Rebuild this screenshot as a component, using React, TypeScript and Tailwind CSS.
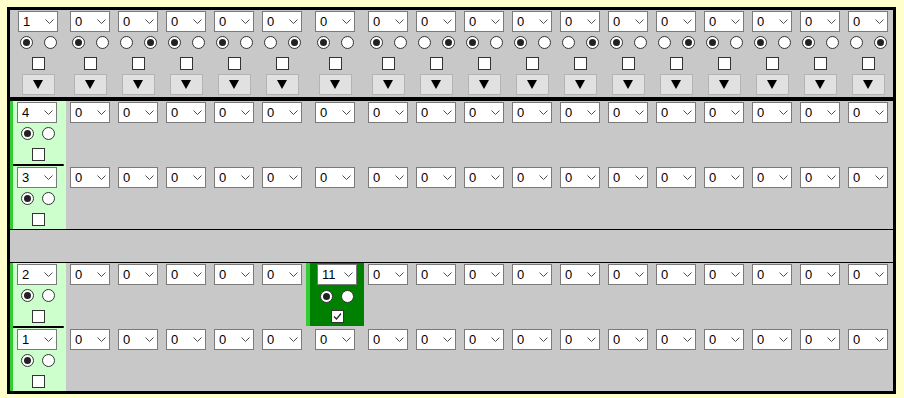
import React from 'react';

// which radio is on in the top header, per column
const TOP_RADIO = [1, 1, 2, 1, 1, 2, 1, 1, 2, 1, 1, 2, 1, 2, 1, 1, 1, 2];

function Chevron() {
  return (
    <svg width="9" height="5" viewBox="0 0 9 5" className="shrink-0">
      <polyline points="0.5,0.5 4.5,4.5 8.5,0.5" fill="none" stroke="#4d4d4d" strokeWidth="1" />
    </svg>
  );
}

function Select({ value }: { value: string }) {
  return (
    <div className="w-[40px] h-[21px] shrink-0 bg-white border border-[#7a7a7a] flex items-center justify-between pl-[4px] pr-[3px] text-[13px] leading-none text-black">
      <span>{value}</span>
      <Chevron />
    </div>
  );
}

function Radio({ on }: { on: boolean }) {
  return (
    <span className="w-[13px] h-[13px] rounded-full border border-[#333] bg-white flex items-center justify-center">
      {on && <span className="w-[7px] h-[7px] rounded-full bg-[#222]" />}
    </span>
  );
}

function Check({ checked = false }: { checked?: boolean }) {
  return (
    <span className="w-[13px] h-[13px] border border-[#333] bg-white flex items-center justify-center">
      {checked && (
        <svg width="11" height="11" viewBox="0 0 11 11">
          <polyline points="2,5.5 4.5,8 9,2.5" fill="none" stroke="#222" strokeWidth="1.2" />
        </svg>
      )}
    </span>
  );
}

function TopCell({ value, radio }: { value: string; radio: number }) {
  return (
    <div className="flex flex-col items-center pt-[1px]">
      <Select value={value} />
      <div className="mt-[4px] flex gap-[11px]">
        <Radio on={radio === 1} />
        <Radio on={radio === 2} />
      </div>
      <div className="mt-[8px]">
        <Check />
      </div>
      <div className="mt-[4px] w-[33px] h-[21px] bg-[#e1e1e1] border border-[#b4b4b4] flex items-center justify-center">
        <svg width="10" height="9" viewBox="0 0 10 9">
          <polygon points="0,0 10,0 5,9" fill="#000" />
        </svg>
      </div>
    </div>
  );
}

function LabelCell({ value, line }: { value: string; line: boolean }) {
  return (
    <div className="bg-[#ccffcc] border-l-[3px] border-[#33cc33] flex flex-col">
      {line && <div className="h-[2px] bg-black mr-[2px] rounded-r-full" />}
      <div className="ml-[4px] w-[42px] flex flex-col items-center pt-[1px]">
        <div className="self-start">
          <Select value={value} />
        </div>
        <div className="mt-[4px] flex gap-[8px]">
          <Radio on />
          <Radio on={false} />
        </div>
        <div className="mt-[8px]">
          <Check />
        </div>
      </div>
    </div>
  );
}

function ActiveCell({ value }: { value: string }) {
  return (
    <div className="bg-[#008000] border-l-[4px] border-[#33cc33] flex flex-col items-center pt-[1px]">
      <Select value={value} />
      <div className="mt-[5px] flex gap-[8px]">
        <Radio on />
        <Radio on={false} />
      </div>
      <div className="mt-[7px]">
        <Check checked />
      </div>
    </div>
  );
}

type RowData = { label: string; line: boolean; height: string; active?: string };

const ROWS_TOP: RowData[] = [
  { label: '4', line: false, height: 'h-[63px]' },
  { label: '3', line: true, height: 'h-[65px]' },
];
const ROWS_BOTTOM: RowData[] = [
  { label: '2', line: false, height: 'h-[63px]', active: '11' },
  { label: '1', line: true, height: 'h-[65px]' },
];

function Row({ row }: { row: RowData }) {
  const cells = Array.from({ length: 17 }, (_, i) => i + 1);
  return (
    <div className={`grid grid-cols-[56px_repeat(5,48px)_58px_repeat(11,48px)] ${row.height}`}>
      <LabelCell value={row.label} line={row.line} />
      {cells.map((c) =>
        c === 6 && row.active ? (
          <ActiveCell key={c} value={row.active} />
        ) : (
          <div key={c} className={`flex justify-center ${row.line ? 'pt-[3px]' : 'pt-[1px]'}`}>
            <Select value="0" />
          </div>
        )
      )}
    </div>
  );
}

export default function App() {
  return (
    <div className="w-[904px] h-[398px] bg-[#ffffcc] pt-[7px] pl-[7px] font-['Liberation_Sans',Arial,sans-serif]">
      <div className="w-[889px] border-[3px] border-black bg-[#c8c8c8]">
        <div className="grid grid-cols-[56px_repeat(5,48px)_58px_repeat(11,48px)] h-[87px]">
          {TOP_RADIO.map((r, i) => (
            <TopCell key={i} value={i === 0 ? '1' : '0'} radio={r} />
          ))}
        </div>
        <div className="h-[4px] bg-black" />
        {ROWS_TOP.map((row) => (
          <Row key={row.label} row={row} />
        ))}
        <div className="h-[34px] border-y border-black" />
        {ROWS_BOTTOM.map((row) => (
          <Row key={row.label} row={row} />
        ))}
      </div>
    </div>
  );
}
